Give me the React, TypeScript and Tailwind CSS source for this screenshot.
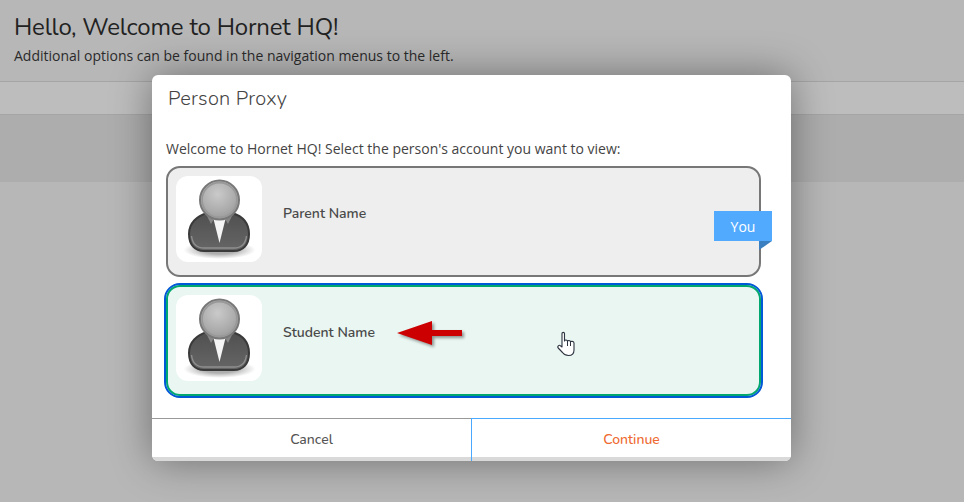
import React from 'react';

const heading = "font-['Nunito','Lato','Noto_Sans',sans-serif]";

function Avatar({ id }: { id: string }) {
  return (
    <div className="w-[86px] h-[86px] bg-white rounded-xl shrink-0">
      <svg width="86" height="86" viewBox="0 0 86 86">
        <defs>
          <radialGradient id={`${id}-head`} cx="45%" cy="35%" r="65%">
            <stop offset="0" stopColor="#cacaca" />
            <stop offset="0.7" stopColor="#ababab" />
            <stop offset="1" stopColor="#9a9a9a" />
          </radialGradient>
          <linearGradient id={`${id}-body`} x1="0" y1="0" x2="0" y2="1">
            <stop offset="0" stopColor="#505050" />
            <stop offset="1" stopColor="#666" />
          </linearGradient>
          <radialGradient id={`${id}-shadow`} cx="50%" cy="50%" r="50%">
            <stop offset="0.45" stopColor="#8c8c8c" stopOpacity="0.7" />
            <stop offset="1" stopColor="#999" stopOpacity="0" />
          </radialGradient>
        </defs>
        <ellipse cx="43.5" cy="74" rx="36" ry="9" fill={`url(#${id}-shadow)`} />
        <path
          d="M13 58C13 47 21 40 31 37L56 37C66 40 73 47 73 58C73 69 67 75 58 75L28 75C19 75 13 69 13 58Z"
          fill={`url(#${id}-body)`}
          stroke="#3a3a3a"
          strokeWidth="2"
        />
        <path
          d="M15.5 60C16.5 68 21 72 28 72L58 72C65 72 69.5 68 70.5 60"
          fill="none"
          stroke="#8f8f8f"
          strokeWidth="1.4"
        />
        <path d="M30 38L35 48L38 43L49 43L52 48L57 38Z" fill="#858585" />
        <path d="M37.5 43L49.5 43L43.5 67Z" fill="#f5f5f5" />
        <circle cx="43.5" cy="24" r="19.5" fill={`url(#${id}-head)`} stroke="#787878" strokeWidth="2" />
        <circle cx="43.5" cy="24" r="17.4" fill="none" stroke="#989898" strokeWidth="1.6" />
      </svg>
    </div>
  );
}

export default function App() {
  return (
    <div className="relative w-[964px] h-[502px] overflow-hidden bg-[#b7b7b7] font-['Open_Sans',sans-serif] text-[#333]">
      {/* page behind the dim layer */}
      <div className="h-[82px] bg-[#b7b7b7] border-b border-[#a5a5a5] px-[14px] pt-[12px]">
        <h1 className={`${heading} text-[24px] leading-[30px] text-[#222] tracking-[-0.18px]`}>Hello, Welcome to Hornet HQ!</h1>
        <p className="text-[14px] leading-[20px] mt-[4px] text-[#2b2b2b]">
          Additional options can be found in the navigation menus to the left.
        </p>
      </div>
      <div className="h-[33px] bg-[#bdbdbd] border-b border-[#a5a5a5]" />
      <div className="h-[67px] bg-[#adadad]" />

      {/* modal */}
      <div className="absolute left-[152px] top-[75px] w-[639px] h-[386px] bg-white rounded-[6px] shadow-[0_0_40px_rgba(0,0,0,0.4)] flex flex-col">
        <div className={`${heading} text-[20px] font-light tracking-[0.25px] leading-[28px] text-[#444] pl-4 pt-[10px]`}>Person Proxy</div>
        <div className="px-[14px] flex-1">
          <p className="text-[14px] leading-[20px] mt-[26px] mb-[7px] text-[#444]">
            Welcome to Hornet HQ! Select the person's account you want to view:
          </p>

          <div className="relative w-[595px] h-[111px] bg-[#eeeeee] border-2 border-[#777] rounded-[14px] p-2 flex gap-[21px]">
            <Avatar id="parent" />
            <div className={`${heading} text-[14px] font-semibold text-[#4a4a4a] leading-[18px] mt-[29px]`}>Parent Name</div>
            <div className="absolute left-[546px] top-[43px] w-[58px] h-[30px] bg-[#52aaff] flex items-center justify-center text-white text-[14px]">
              You
            </div>
            <svg className="absolute left-[591px] top-[73px]" width="13" height="9" viewBox="0 0 13 9">
              <path d="M0 0H13L0 9Z" fill="#3a7fc0" />
            </svg>
          </div>

          <div className="relative w-[595px] h-[111px] mt-2 bg-[#e9f6f1] border-2 border-[#00a870] outline-2 outline-[#0059d6] rounded-[14px] p-2 flex gap-[21px]">
            <Avatar id="student" />
            <div className={`${heading} text-[14px] font-semibold text-[#4a4a4a] leading-[18px] mt-[29px]`}>Student Name</div>
            {/* annotation arrow */}
            <svg
              className="absolute left-[229px] top-[33px] drop-shadow-[2px_2px_1.5px_rgba(0,0,0,0.4)]"
              width="72"
              height="32"
              viewBox="0 0 72 32"
            >
              <path d="M0 13L35 1V10H65V16H35V25Z" fill="#cc0000" />
            </svg>
            {/* hand cursor */}
            <svg className="absolute left-[389px] top-[44px]" width="20" height="26" viewBox="0 0 20 26">
              <path
                d="M5 2.5C5 1 7.5 1 7.5 2.5V10C7.5 8.5 10.5 8.5 10.5 10.5C10.5 9 13.5 9 13.5 11C13.5 10 17 10 17 12V19C17 22.5 15 24.5 11.5 24.5C8.5 24.5 7 23.5 5.5 21.5L1.2 17C0 15.5 2 13.5 3.4 14.7L5 16Z"
                fill="#fff"
                stroke="#2d3340"
                strokeWidth="1.1"
                strokeLinejoin="round"
              />
              <path d="M10.5 10.5V15M13.5 11V15" stroke="#2d3340" strokeWidth="1" fill="none" />
            </svg>
          </div>
        </div>

        <div className={`${heading} flex h-[43px] text-[14px] font-medium rounded-b-[6px] overflow-hidden bg-[linear-gradient(to_top,#d9d9d9_4px,#ffffff_4px)]`}>
          <div className="w-[319px] pb-[2px] border-t border-t-[#999] flex items-center justify-center text-[#555]">
            Cancel
          </div>
          <div className="flex-1 pb-[2px] border-t border-t-[#4aa8ff] border-l border-l-[#4aa8ff] flex items-center justify-center text-[#ee6a30]">
            Continue
          </div>
        </div>
      </div>
    </div>
  );
}
